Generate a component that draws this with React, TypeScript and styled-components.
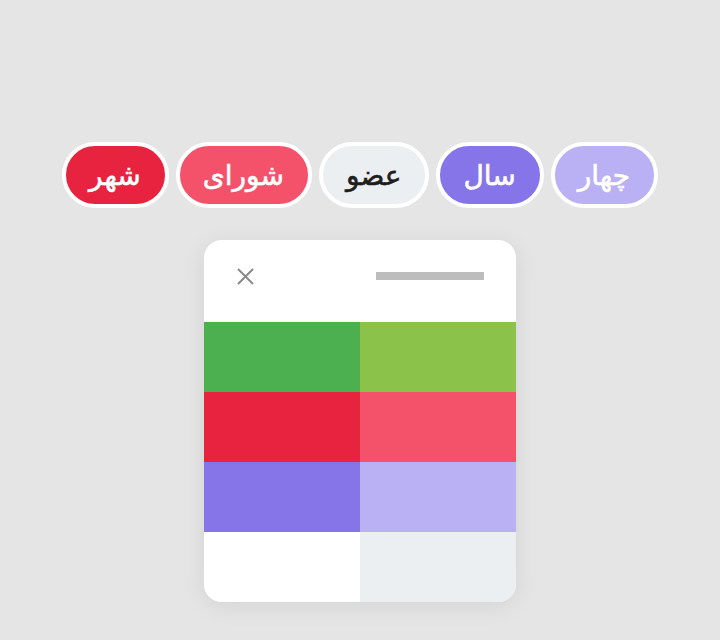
import React from 'react'
import styled, { createGlobalStyle } from 'styled-components'

const GlobalStyle = createGlobalStyle`
    html, body {
        margin: 0;
        padding: 0;
        background: #e5e5e5;
    }
    body {
        font-family: "DejaVu Sans", "Noto Sans", sans-serif;
    }
`

const words = [
    { text: 'چهار', bg: '#bab0f4', color: '#ffffff' },
    { text: 'سال', bg: '#8675e8', color: '#ffffff' },
    { text: 'عضو', bg: '#eceff1', color: '#1e1e1e' },
    { text: 'شورای', bg: '#f4516a', color: '#ffffff' },
    { text: 'شهر', bg: '#e8233f', color: '#ffffff' },
]

const swatches = [
    '#4caf50', '#8bc34a',
    '#e8233f', '#f4516a',
    '#8675e8', '#bab0f4',
    '#ffffff', '#eceff1',
]

const App: React.FC = () => {
    return (
        <>
            <GlobalStyle />
            <Page>
                <Words dir='rtl'>
                    {words.map((w) => (
                        <Pill key={w.text} $bg={w.bg} $color={w.color}>{w.text}</Pill>
                    ))}
                </Words>

                <Card>
                    <Header>
                        <Close aria-label='close'>
                            <svg width='17' height='17' viewBox='0 0 17 17'>
                                <path d='M1 1 L16 16 M16 1 L1 16' stroke='#8a8a8a' strokeWidth='2' fill='none' />
                            </svg>
                        </Close>
                        <Handle />
                    </Header>
                    <Swatches>
                        {swatches.map((c, i) => (
                            <Swatch key={i} $bg={c} />
                        ))}
                    </Swatches>
                </Card>
            </Page>
        </>
    )
}

const Page = styled.div`
    width: 720px;
    height: 640px;
    display: flex;
    flex-direction: column;
    align-items: center;
    padding-top: 142px;
    box-sizing: border-box;
`

const Words = styled.div`
    display: flex;
    gap: 7px;
`

const Pill = styled.div<{ $bg: string; $color: string }>`
    height: 58px;
    padding: 0 24px 0 23px;
    display: flex;
    align-items: center;
    justify-content: center;
    border: 4px solid #ffffff;
    border-radius: 33px;
    background: ${(p) => p.$bg};
    color: ${(p) => p.$color};
    font-size: 28px;
    font-weight: 400;
    -webkit-text-stroke: 0.6px currentColor;
`

const Card = styled.div`
    margin-top: 32px;
    width: 312px;
    background: #ffffff;
    border-radius: 18px;
    overflow: hidden;
    box-shadow: 0 4px 24px rgba(0, 0, 0, 0.08);
`

const Header = styled.div`
    height: 70px;
    margin-bottom: 12px;
    padding: 2px 32px 0 33px;
    display: flex;
    align-items: center;
    justify-content: space-between;
    box-sizing: border-box;
`

const Close = styled.div`
    width: 17px;
    height: 17px;
    display: flex;
`

const Handle = styled.div`
    width: 108px;
    height: 8px;
    background: #bdbdbd;
`

const Swatches = styled.div`
    display: grid;
    grid-template-columns: 1fr 1fr;
    grid-auto-rows: 70px;
`

const Swatch = styled.div<{ $bg: string }>`
    background: ${(p) => p.$bg};
`

export default App
